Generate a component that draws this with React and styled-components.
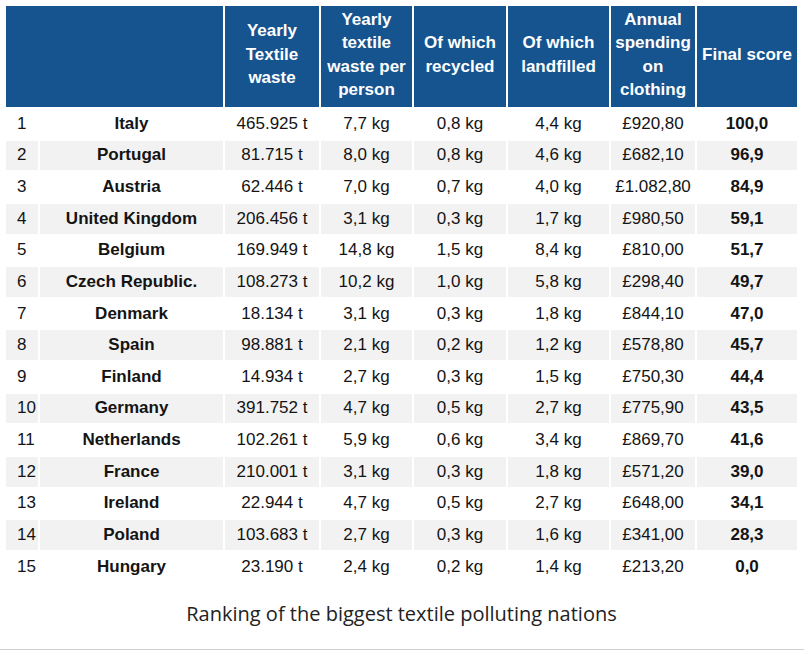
import React from "react";
import styled, { createGlobalStyle } from "styled-components";

const Global = createGlobalStyle`
  *, *::before, *::after { box-sizing: border-box; }
  html, body { margin: 0; padding: 0; background: #fff; }
`;

const Figure = styled.figure`
  margin: 0;
  padding: 4px 5px 22px 4px;
  border-bottom: 1px solid #cfcfcf;
`;

const Table = styled.table`
  width: 795px;
  table-layout: fixed;
  border-collapse: separate;
  border-spacing: 2px;
  font-family: "Liberation Sans", Arial, sans-serif;
  font-size: 17px;
  color: #141414;
`;

const HeadCell = styled.th`
  background: #16548f;
  color: #fff;
  font-weight: 700;
  line-height: 23.5px;
  height: 101px;
  padding: 0 1px 4px;
  text-align: center;
  vertical-align: middle;
`;

const Row = styled.tr`
  background: ${(p) => (p.$shade ? "#f2f2f2" : "#fff")};
`;

const Cell = styled.td`
  height: 29.64px;
  padding: ${(p) => (p.$left ? "0 0 0 11px" : "0 1px")};
  text-align: ${(p) => (p.$left ? "left" : "center")};
  font-weight: ${(p) => (p.$bold ? 700 : 400)};
  vertical-align: middle;
  white-space: nowrap;
  line-height: 20px;
`;

const Caption = styled.figcaption`
  margin-top: 17px;
  text-align: center;
  font-family: "Open Sans", sans-serif;
  font-size: 20px;
  line-height: 27px;
  color: #222;
`;

const widths = [32, 183, 94, 91, 92, 101, 84, 100];

const headers = [
  "Yearly Textile waste",
  "Yearly textile waste per person",
  "Of which recycled",
  "Of which landfilled",
  "Annual spending on clothing",
  "Final score",
];

const data = [
  ["Italy", "465.925 t", "7,7 kg", "0,8 kg", "4,4 kg", "£920,80", "100,0"],
  ["Portugal", "81.715 t", "8,0 kg", "0,8 kg", "4,6 kg", "£682,10", "96,9"],
  ["Austria", "62.446 t", "7,0 kg", "0,7 kg", "4,0 kg", "£1.082,80", "84,9"],
  ["United Kingdom", "206.456 t", "3,1 kg", "0,3 kg", "1,7 kg", "£980,50", "59,1"],
  ["Belgium", "169.949 t", "14,8 kg", "1,5 kg", "8,4 kg", "£810,00", "51,7"],
  ["Czech Republic.", "108.273 t", "10,2 kg", "1,0 kg", "5,8 kg", "£298,40", "49,7"],
  ["Denmark", "18.134 t", "3,1 kg", "0,3 kg", "1,8 kg", "£844,10", "47,0"],
  ["Spain", "98.881 t", "2,1 kg", "0,2 kg", "1,2 kg", "£578,80", "45,7"],
  ["Finland", "14.934 t", "2,7 kg", "0,3 kg", "1,5 kg", "£750,30", "44,4"],
  ["Germany", "391.752 t", "4,7 kg", "0,5 kg", "2,7 kg", "£775,90", "43,5"],
  ["Netherlands", "102.261 t", "5,9 kg", "0,6 kg", "3,4 kg", "£869,70", "41,6"],
  ["France", "210.001 t", "3,1 kg", "0,3 kg", "1,8 kg", "£571,20", "39,0"],
  ["Ireland", "22.944 t", "4,7 kg", "0,5 kg", "2,7 kg", "£648,00", "34,1"],
  ["Poland", "103.683 t", "2,7 kg", "0,3 kg", "1,6 kg", "£341,00", "28,3"],
  ["Hungary", "23.190 t", "2,4 kg", "0,2 kg", "1,4 kg", "£213,20", "0,0"],
];

export default function App() {
  return (
    <>
      <Global />
      <Figure>
        <Table>
          <colgroup>
            {widths.map((w, i) => (
              <col key={i} style={{ width: w }} />
            ))}
          </colgroup>
          <thead>
            <tr>
              <HeadCell colSpan={2} />
              {headers.map((h) => (
                <HeadCell key={h}>{h}</HeadCell>
              ))}
            </tr>
          </thead>
          <tbody>
            {data.map((r, i) => (
              <Row key={r[0]} $shade={i % 2 === 1}>
                <Cell $left>{i + 1}</Cell>
                <Cell $bold>{r[0]}</Cell>
                <Cell>{r[1]}</Cell>
                <Cell>{r[2]}</Cell>
                <Cell>{r[3]}</Cell>
                <Cell>{r[4]}</Cell>
                <Cell>{r[5]}</Cell>
                <Cell $bold>{r[6]}</Cell>
              </Row>
            ))}
          </tbody>
        </Table>
        <Caption>Ranking of the biggest textile polluting nations</Caption>
      </Figure>
    </>
  );
}
